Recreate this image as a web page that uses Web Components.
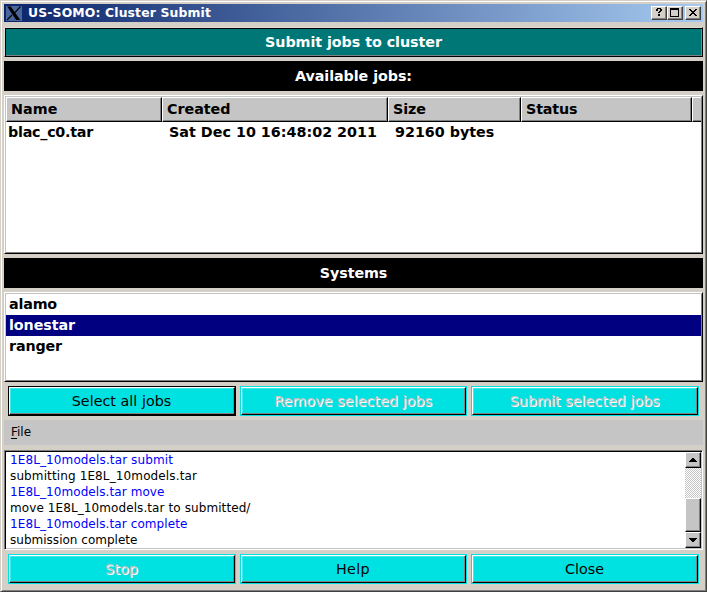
<!DOCTYPE html>
<html lang="en">
<head>
<meta charset="utf-8">
<title>US-SOMO: Cluster Submit</title>
<style>
html,body{margin:0;width:707px;height:592px;overflow:hidden;background:#d4d0c8;font:14.3px/16px "DejaVu Sans",sans-serif;color:#000}
</style>
</head>
<body>
<somo-window></somo-window>
<script>
const define = (name, html, ready) => customElements.define(name, class extends HTMLElement {
  connectedCallback() {
    if (this.shadowRoot) return;
    this.attachShadow({mode: 'open'}).innerHTML = html;
    if (ready) ready(this, this.shadowRoot);
  }
});

/* Single-line text whose tracking is adjusted to a given advance width. */
define('fit-text', `<style>:host{display:inline-block;white-space:pre}span{display:inline-block}</style><span><slot></slot></span>`, (el, root) => {
  const span = root.querySelector('span');
  const w = +el.getAttribute('w');
  if (!w) return;
  const n = el.textContent.length;
  span.style.letterSpacing = (w - span.getBoundingClientRect().width) / n + 'px';
});

define('title-button', `<style>
:host{display:block;box-sizing:border-box;width:16px;height:14px;background:#d4d0c8;border:1px solid;border-color:#fff #404040 #404040 #fff;box-shadow:inset -1px -1px #808080}
svg{display:block;width:14px;height:12px}</style><svg viewBox="0 0 14 12" shape-rendering="crispEdges"><path fill="#000"/></svg>`, (el, root) => {
  const shapes = {
    help: 'M4 2h1v-1h4v1h1v2h-1v1h-1v1h-2v-1h1v-1h1v-2h-2v2h-2zM6 7h2v2h-2z',
    max: 'M2 1h9v9h-9zM3 3v6h7v-6z',
    close: 'M3 2h2v1h1v1h2v-1h1v-1h2v1h-1v1h-1v1h-1v1h1v1h1v1h1v1h-2v-1h-1v-1h-2v1h-1v1h-2v-1h1v-1h1v-1h1v-1h-1v-1h-1v-1h-1z'
  };
  const p = root.querySelector('path');
  p.setAttribute('d', shapes[el.getAttribute('kind')]);
  p.setAttribute('fill-rule', 'evenodd');
});

define('title-bar', `<style>
:host{display:flex;align-items:center;box-sizing:border-box;height:18px;padding:0 2px;background:linear-gradient(90deg,#0a246a,#a6caf0);color:#fff;font-weight:bold;font-size:12.4px}
svg{width:16px;height:16px;margin-right:6px}
.grow{flex:1}.gap{width:2px}</style>
<svg viewBox="0 0 16 16"><rect y="1" width="16" height="15" fill="#48659c"/><path d="M1.2 1.5h3.6l9.5 13.5h-4.2z"/><path d="M14.5 1.5L8.8 7.6M6 10L1 15" stroke="#000" stroke-width="1.1"/></svg>
<slot></slot><div class="grow"></div>
<title-button kind="help"></title-button><title-button kind="max"></title-button><div class="gap"></div><title-button kind="close"></title-button>`);

define('head-band', `<style>
:host{display:flex;box-sizing:border-box;height:30px;align-items:center;justify-content:center;background:#000;color:#fff;font-weight:bold}
:host([teal]){background:#007777;border:1px solid #000;border-top-color:#dedad4;border-left-color:#dedad4;box-shadow:inset 1px 1px #000,inset -1px -1px #808080}
</style><slot></slot>`);

define('raised-box', `<style>
:host{display:block;box-sizing:border-box;background:#fff;border:1px solid;border-color:#fff #000 #000 #fff;padding:1px;font-weight:bold;
box-shadow:inset 1px 1px #c3c3c3,inset -1px -1px #808080}</style><slot></slot>`);

define('column-head', `<style>
:host{display:flex;align-items:center;box-sizing:border-box;height:25px;padding:0 0 2px 4px;background:#c5c5c5;border:1px solid;border-color:#fff #000 #000 #fff;box-shadow:inset -1px -1px #808080}
:host([last]){border-right:0;box-shadow:inset 0 -1px #808080}</style><slot></slot>`);

define('job-table', `<style>
.g{display:grid;grid-template-columns:156px 226px 133px 171px 9px}
.r{padding-top:2px;line-height:17px}
.r *{margin-left:2px}.r :nth-child(n+2){margin-left:7px}</style>
<div class="g">
<column-head><fit-text w="46.5">Name</fit-text></column-head>
<column-head><fit-text w="63.5">Created</fit-text></column-head>
<column-head><fit-text w="33">Size</fit-text></column-head>
<column-head><fit-text w="51.5">Status</fit-text></column-head>
<column-head last></column-head></div>
<div class="g r"><fit-text w="85">blac_c0.tar</fit-text><fit-text w="208">Sat Dec 10 16:48:02 2011</fit-text><fit-text w="99.3">92160 bytes</fit-text></div>`);

define('list-row', `<style>
:host{display:flex;align-items:center;box-sizing:border-box;height:21px;padding:0 0 2px 3px}
:host([selected]){background:#000080;color:#fff}</style><slot></slot>`);

define('push-button', `<style>
:host{display:flex;box-sizing:border-box;height:30px;border:1px solid #00e2e2;background:#00e2e2}
.b{flex:1;display:flex;align-items:center;justify-content:center;border:1px solid;border-color:#fff #000 #000 #fff;padding-right:1px;box-shadow:inset -1px -1px #808080,inset 1px 1px #40e8e8}
:host([default]){border-color:#000}
:host([disabled]){color:#c3c3c3;text-shadow:1px 1px #fff}
</style><div class="b"><slot></slot></div>`);

define('scroll-bar', `<style>
:host{display:flex;flex-direction:column;width:16px;background:repeating-conic-gradient(#c5c5c5 0 25%,#fff 0 50%) 0 0/2px 2px}
.k{box-sizing:border-box;height:16px;background:#c5c5c5;border:1px solid;border-color:#fff #000 #000 #fff;box-shadow:inset -1px -1px #808080}
.t{margin-top:30px;height:34px}svg{display:block}</style>
<div class="k"><svg width="14" height="14" shape-rendering="crispEdges"><path d="M6 5h2v1h1v1h1v1h1v1h-8v-1h1v-1h1v-1h1z"/></svg></div>
<div class="k t"></div>
<div class="k"><svg width="14" height="14" shape-rendering="crispEdges"><path d="M3 5h8v1h-1v1h-1v1h-1v1h-2v-1h-1v-1h-1v-1h-1z"/></svg></div>`);

define('log-view', `<style>
:host{display:flex;box-sizing:border-box;height:100px;background:#fff;border:1px solid;border-color:#808080 #fff #fff #808080;box-shadow:inset 1px 1px #000,inset -1px -1px #c3c3c3;padding:1px;font-size:12px;line-height:16px}
.l{flex:1;padding-left:4px;display:flex;flex-direction:column;align-items:flex-start}
.c{color:#0000ff}</style>
<div class="l">
<fit-text class="c" w="163">1E8L_10models.tar submit</fit-text><fit-text w="187">submitting 1E8L_10models.tar</fit-text>
<fit-text class="c" w="154.5">1E8L_10models.tar move</fit-text><fit-text w="240.5">move 1E8L_10models.tar to submitted/</fit-text>
<fit-text class="c" w="177.5">1E8L_10models.tar complete</fit-text><fit-text w="127.5">submission complete</fit-text></div>
<scroll-bar></scroll-bar>`);

define('menu-strip', `<style>
:host{display:flex;align-items:center;box-sizing:border-box;height:25px;background:#c5c5c5;font-size:12px;padding:0 0 2px 7px}
u{text-underline-offset:2px;text-decoration-thickness:1px;text-decoration-skip-ink:none}</style><span><u>F</u>ile</span>`);

define('somo-window', `<style>
:host{display:flex;flex-direction:column;box-sizing:border-box;width:707px;height:592px;background:#d4d0c8;border:1px solid;border-color:#d4d0c8 #404040 #404040 #d4d0c8;box-shadow:inset 1px 1px #fff,inset -1px -1px #808080;padding:3px}
title-bar{margin-bottom:5px;flex:none}
main{display:flex;flex-direction:column;gap:4px}
.jobs{height:159px}.sys{height:90px}
.row{display:grid;grid-template-columns:228px 227px 228px;gap:4px;padding-left:4px}
log-view{margin-top:1px}
</style>
<title-bar><fit-text w="183">US-SOMO: Cluster Submit</fit-text></title-bar>
<main>
<head-band teal><fit-text w="177">Submit jobs to cluster</fit-text></head-band>
<head-band><fit-text w="117">Available jobs:</fit-text></head-band>
<raised-box class="jobs"><job-table></job-table></raised-box>
<head-band><fit-text w="67.5">Systems</fit-text></head-band>
<raised-box class="sys"><list-row><fit-text w="48">alamo</fit-text></list-row><list-row selected><fit-text w="66">lonestar</fit-text></list-row><list-row><fit-text w="53">ranger</fit-text></list-row></raised-box>
<div class="row"><push-button default><fit-text w="99.5">Select all jobs</fit-text></push-button><push-button disabled><fit-text w="158">Remove selected jobs</fit-text></push-button><push-button disabled><fit-text w="150">Submit selected jobs</fit-text></push-button></div>
<menu-strip></menu-strip>
<log-view></log-view>
<div class="row"><push-button disabled><fit-text w="33">Stop</fit-text></push-button><push-button><fit-text w="34">Help</fit-text></push-button><push-button><fit-text w="39">Close</fit-text></push-button></div>
</main>`);
</script>
</body>
</html>
